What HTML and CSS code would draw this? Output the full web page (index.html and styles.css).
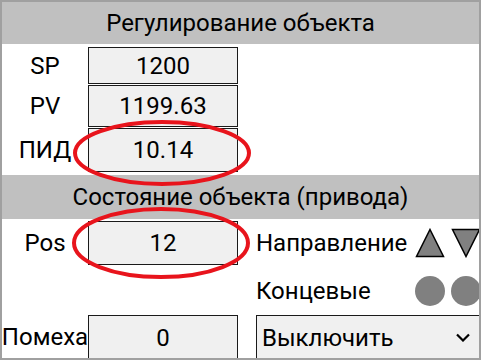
FILE: index.html
```html
<!DOCTYPE html>
<html lang="ru">
<head>
    <meta charset="UTF-8">
    <title>Регулирование объекта</title>
    <link rel="stylesheet" href="styles.css">
</head>
<body>
    <div class="panel">
        <div class="head">Регулирование объекта</div>
        <div class="reg">
            <div class="row row-sp"><span class="label">SP</span><div class="field">1200</div></div>
            <div class="row row-pv"><span class="label">PV</span><div class="field">1199.63</div></div>
            <div class="row row-pid"><span class="label">ПИД</span><div class="field">10.14</div></div>
        </div>
        <div class="head head-state">Состояние объекта (привода)</div>
        <div class="state">
            <span class="label">Pos</span>
            <div class="field field-pos">12</div>
            <div class="side">
                <span class="side-label">Направление</span>
                <div class="signs">
                    <svg width="30" height="30" viewBox="0 0 30 30"><polygon points="15,1.5 28.5,28.5 1.5,28.5" fill="#808080" stroke="#000" stroke-width="1.5"/></svg>
                    <svg width="30" height="30" viewBox="0 0 30 30"><polygon points="1.5,1.5 28.5,1.5 15,28.5" fill="#808080" stroke="#000" stroke-width="1.5"/></svg>
                </div>
            </div>
            <div class="empty"></div>
            <div class="empty"></div>
            <div class="side">
                <span class="side-label">Концевые</span>
                <div class="signs">
                    <span class="lamp"></span>
                    <span class="lamp"></span>
                </div>
            </div>
            <span class="label label-bottom">Помеха</span>
            <div class="field field-bottom">0</div>
            <div class="side side-select">
                <div class="select">
                    <span>Выключить</span>
                    <svg width="14" height="9" viewBox="0 0 14 9"><polyline points="1,1.5 7,7.5 13,1.5" fill="none" stroke="#000" stroke-width="2.2"/></svg>
                </div>
            </div>
        </div>
        <svg class="marks" width="481" height="360" viewBox="0 0 481 360">
            <ellipse cx="162" cy="153" rx="87" ry="31" fill="none" stroke="#e8141c" stroke-width="4"/>
            <ellipse cx="161" cy="243" rx="87" ry="34" fill="none" stroke="#e8141c" stroke-width="4"/>
        </svg>
    </div>
</body>
</html>
```

FILE: styles.css
```css
* {
    box-sizing: border-box;
}
body {
    margin: 0;
    background: #fff;
    font-family: Roboto, "Liberation Sans", sans-serif;
    font-size: 24px;
    color: #000;
}
.panel {
    position: relative;
    width: 481px;
    height: 360px;
    border: 2px solid #a0a0a0;
    overflow: hidden;
}
.head {
    height: 42px;
    background: #c0c0c0;
    display: flex;
    align-items: center;
    justify-content: center;
}
.head-state {
    height: 44px;
}
.reg {
    height: 131px;
    padding-top: 3px;
    display: flex;
    flex-direction: column;
    gap: 1px;
}
.row {
    display: grid;
    grid-template-columns: 86px 150px;
    height: 37px;
}
.row-pv {
    height: 42px;
}
.row-pid {
    height: 44px;
}
.label {
    display: flex;
    align-items: center;
    justify-content: center;
    white-space: nowrap;
}
.field {
    background: #f0f0f0;
    border: 1px solid #1a1a1a;
    display: flex;
    align-items: center;
    justify-content: center;
}
.state {
    display: grid;
    grid-template-columns: 86px 150px 1fr;
    grid-template-rows: 48px 48px 43px;
}
.field-pos {
    margin-top: 2px;
    height: 44px;
}
.field-bottom {
    height: 45px;
}
.side {
    display: flex;
    align-items: center;
    justify-content: space-between;
    padding-left: 18px;
}
.signs {
    display: flex;
    gap: 6px;
    margin-right: -2px;
}
.signs svg {
    display: block;
}
.lamp {
    width: 30px;
    height: 30px;
    border-radius: 50%;
    background: #808080;
}
.side-select {
    align-items: stretch;
}
.select {
    flex: 1;
    margin-right: -2px;
    height: 45px;
    background: #f0f0f0;
    border: 1px solid #1a1a1a;
    display: flex;
    align-items: center;
    justify-content: space-between;
    padding: 0 10px 0 5px;
}
.marks {
    position: absolute;
    left: -2px;
    top: -2px;
    pointer-events: none;
}
```
